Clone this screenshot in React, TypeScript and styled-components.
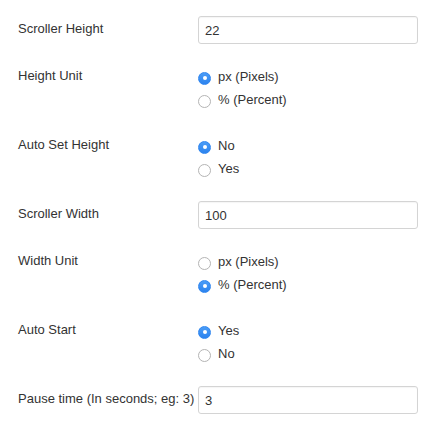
import styled, { createGlobalStyle } from "styled-components";

const GlobalStyle = createGlobalStyle`
  body {
    margin: 0;
    background: #ffffff;
    font-family: "Liberation Sans", Arial, sans-serif;
    font-size: 13px;
    color: #333333;
  }
`;

const FormTable = styled.div`
  display: flex;
  flex-direction: column;
  padding: 8px 0 0 18px;
  width: 443px;
  box-sizing: border-box;
`;

const Row = styled.div`
  display: grid;
  grid-template-columns: 180px 220px;
  align-items: start;
  padding: 8px 0 11px;
`;

const Label = styled.div`
  padding-top: 4px;
  line-height: 17px;
  color: #333333;
  white-space: nowrap;
`;

const TextInput = styled.input`
  box-sizing: border-box;
  width: 220px;
  height: 28px;
  margin: 0;
  padding: 0 6px;
  border: 1px solid #d4d4d4;
  border-radius: 3px;
  box-shadow: inset 0 1px 1px rgba(0, 0, 0, 0.04);
  font-family: "Liberation Sans", Arial, sans-serif;
  font-size: 13px;
  color: #333333;
  background: #ffffff;
  outline: none;
`;

const RadioGroup = styled.div`
  display: flex;
  flex-direction: column;
  padding: 2px 0;
`;

const RadioLine = styled.label`
  display: flex;
  align-items: center;
  gap: 7px;
  height: 23px;
  line-height: 23px;
  color: #333333;
`;

const RadioDot = styled.span<{ $checked: boolean }>`
  position: relative;
  top: 1.5px;
  box-sizing: border-box;
  flex: none;
  width: 13px;
  height: 13px;
  border-radius: 50%;
  border: 1px solid ${(p) => (p.$checked ? "#2f86f0" : "#b4b4b4")};
  background: ${(p) =>
    p.$checked ? "linear-gradient(#4a9cf7, #2c83ee)" : "#ffffff"};
  display: flex;
  align-items: center;
  justify-content: center;

  &::after {
    content: "";
    display: ${(p) => (p.$checked ? "block" : "none")};
    width: 4px;
    height: 4px;
    border-radius: 50%;
    background: #ffffff;
  }
`;

type Option = { text: string; checked: boolean };

const Radios = ({ options }: { options: Option[] }) => (
  <RadioGroup>
    {options.map((o) => (
      <RadioLine key={o.text}>
        <RadioDot $checked={o.checked} />
        {o.text}
      </RadioLine>
    ))}
  </RadioGroup>
);

const App = () => {
  return (
    <>
      <GlobalStyle />
      <FormTable>
        <Row>
          <Label>Scroller Height</Label>
          <TextInput defaultValue="22" />
        </Row>
        <Row>
          <Label>Height Unit</Label>
          <Radios
            options={[
              { text: "px (Pixels)", checked: true },
              { text: "% (Percent)", checked: false },
            ]}
          />
        </Row>
        <Row>
          <Label>Auto Set Height</Label>
          <Radios
            options={[
              { text: "No", checked: true },
              { text: "Yes", checked: false },
            ]}
          />
        </Row>
        <Row>
          <Label>Scroller Width</Label>
          <TextInput defaultValue="100" />
        </Row>
        <Row>
          <Label>Width Unit</Label>
          <Radios
            options={[
              { text: "px (Pixels)", checked: false },
              { text: "% (Percent)", checked: true },
            ]}
          />
        </Row>
        <Row>
          <Label>Auto Start</Label>
          <Radios
            options={[
              { text: "Yes", checked: true },
              { text: "No", checked: false },
            ]}
          />
        </Row>
        <Row>
          <Label>Pause time (In seconds; eg: 3)</Label>
          <TextInput defaultValue="3" />
        </Row>
      </FormTable>
    </>
  );
};

export default App;
